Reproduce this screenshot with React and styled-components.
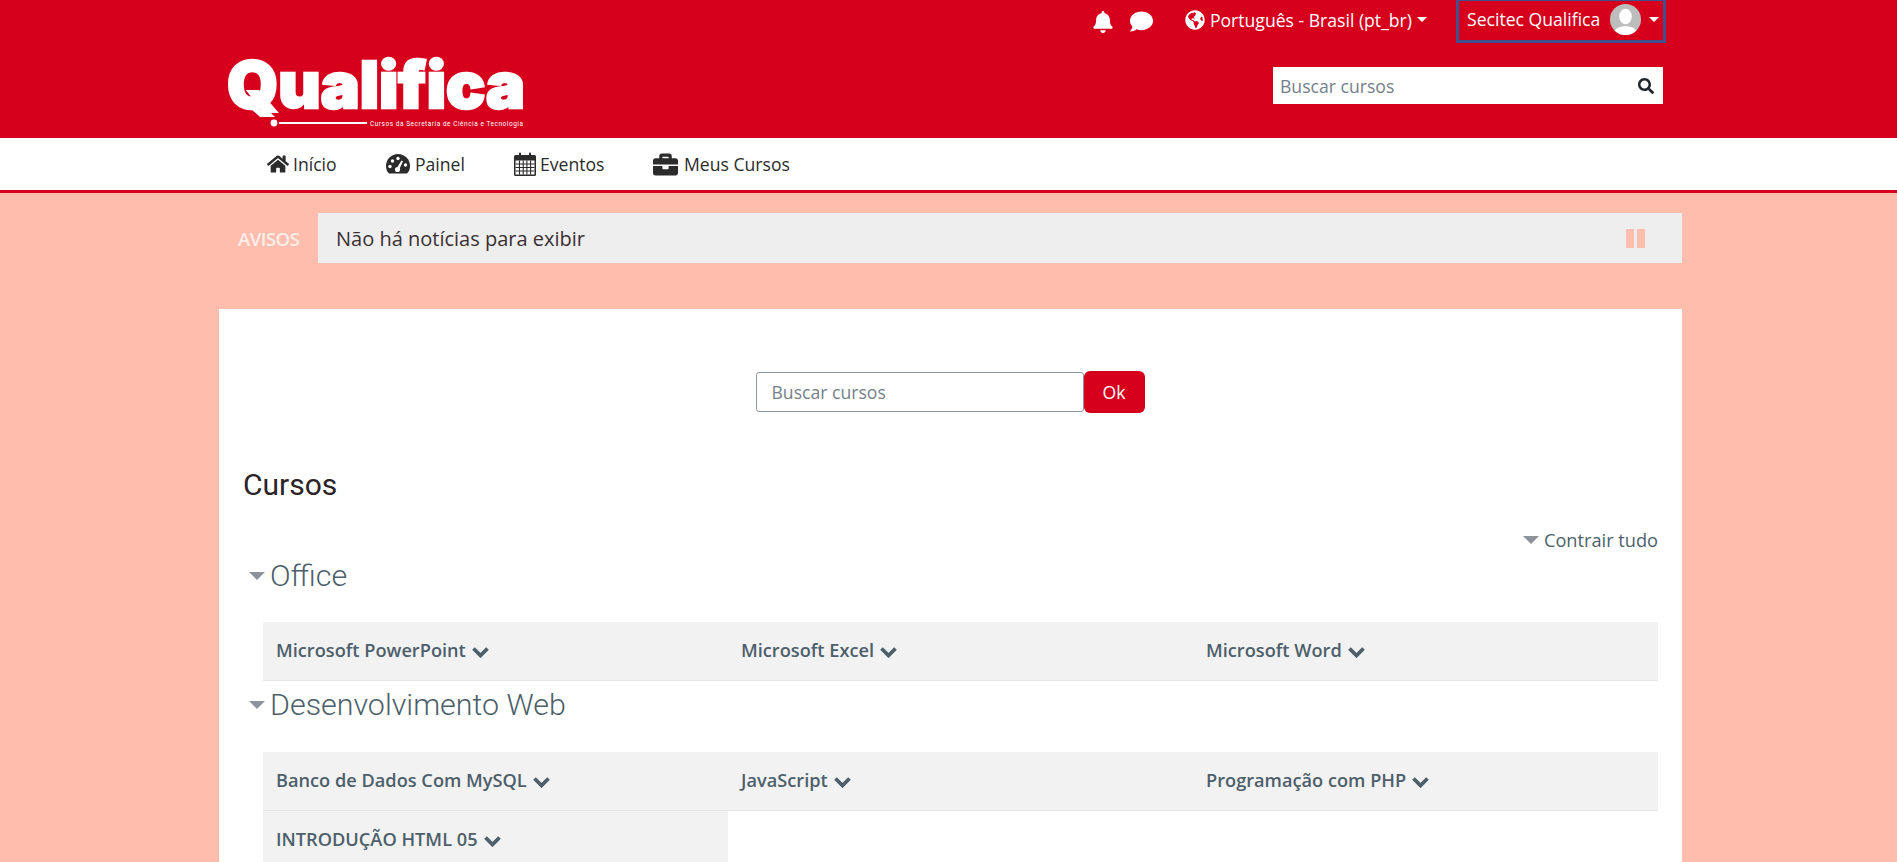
import styled, { createGlobalStyle } from "styled-components";
import {
  FaBell,
  FaBriefcase,
  FaComment,
  FaGlobeAmericas,
  FaHome,
  FaSearch,
} from "react-icons/fa";

const red = "#d6001c";
const pink = "#ffbdae";
const slate = "#4d5f6b";

const Global = createGlobalStyle`
  html, body {
    margin: 0;
    height: 862px;
    overflow: hidden;
    background: ${pink};
    font-family: "Open Sans", "Liberation Sans", sans-serif;
    font-size: 17.6px;
  }
  * { box-sizing: border-box; }
`;

const Header = styled.header`
  height: 138px;
  background: ${red};
  color: #fff;
  padding: 0 231px 0 226px;
`;

const TopRow = styled.div`
  display: flex;
  justify-content: flex-end;
  align-items: center;
  height: 43px;
`;

const TopIcon = styled.span`
  display: flex;
  font-size: ${(p) => p.$size}px;
  margin-right: ${(p) => p.$gap}px;
`;

const Lang = styled.div`
  display: flex;
  align-items: center;
  gap: 5px;
  margin-right: 29px;
  padding-bottom: 4px;
`;

const Caret = styled.span`
  width: 0;
  height: 0;
  flex: none;
  margin-left: ${(p) => p.$left || 0}px;
  border-left: 5px solid transparent;
  border-right: 5px solid transparent;
  border-top: 5px solid #fff;
`;

const UserBox = styled.div`
  display: flex;
  align-items: center;
  width: 210px;
  height: 43px;
  padding: 0 0 3px 8px;
  border: 3px solid #3f4f8f;
  border-top-width: 1px;
  white-space: nowrap;
`;

const Avatar = styled.svg`
  width: 31px;
  height: 31px;
  border-radius: 50%;
  margin-left: 10px;
  flex: none;
`;

const BrandRow = styled.div`
  display: flex;
  justify-content: space-between;
  align-items: flex-start;
  padding-top: 15px;
`;

const Logo = styled.svg`
  width: 302px;
  height: 72px;
  display: block;
  overflow: visible;
`;

const TopSearch = styled.div`
  display: flex;
  align-items: center;
  justify-content: space-between;
  width: 390px;
  height: 37px;
  margin: 9px 3px 0 0;
  padding: 0 9px 0 7px;
  background: #fff;
  color: #75808a;

  svg {
    color: #212529;
    font-size: 16px;
  }
`;

const Nav = styled.nav`
  display: flex;
  align-items: center;
  height: 55px;
  padding-left: 267px;
  background: #fff;
  border-bottom: 3px solid ${red};
  color: #2b2b2b;
`;

const NavItem = styled.a`
  display: flex;
  align-items: center;
  gap: ${(p) => p.$gap || 4}px;
  width: ${(p) => p.$width}px;

  svg {
    font-size: ${(p) => p.$icon || 22}px;
    flex: none;
  }
`;

const Page = styled.main`
  padding: 20px 215px 0 219px;
`;

const Notice = styled.div`
  display: flex;
  align-items: center;
  height: 50px;
`;

const NoticeLabel = styled.div`
  width: 99px;
  padding-left: 19px;
  color: #fff;
  font-size: 18.5px;
  font-weight: 600;
  letter-spacing: -0.5px;
  opacity: 0.75;
`;

const NoticeBar = styled.div`
  flex: 1;
  height: 100%;
  display: flex;
  align-items: center;
  justify-content: space-between;
  padding: 0 37px 0 18px;
  background: #eee;
  color: #3a3033;
  font-size: 20px;
`;

const Pause = styled.span`
  display: flex;
  gap: 3px;

  i {
    width: 8px;
    height: 19px;
    background: ${pink};
  }
`;

const Card = styled.section`
  margin-top: 46px;
  height: 560px;
  padding: 62px 24px 0 24px;
  background: #fff;
`;

const SearchForm = styled.form`
  display: flex;
  align-items: center;
  justify-content: center;
  margin-right: 1px;
`;

const SearchInput = styled.div`
  display: flex;
  align-items: center;
  width: 328px;
  height: 40px;
  padding-left: 15px;
  border: 1px solid #8f959e;
  border-radius: 3px;
  color: #75808a;
`;

const OkButton = styled.button`
  width: 61px;
  height: 42px;
  border: 0;
  border-radius: 6px;
  background: ${red};
  color: #fff;
  font: inherit;
`;

const Title = styled.h2`
  margin: 54px 0 0;
  color: #2b2326;
  font-family: Roboto, sans-serif;
  font-size: 30px;
  font-weight: 400;
  line-height: 36px;
`;

const CollapseAll = styled.div`
  display: flex;
  align-items: center;
  justify-content: flex-end;
  margin-top: 25px;
  color: ${slate};
  font-size: 18.2px;
  line-height: 24px;
`;

const Triangle = styled.span`
  width: 0;
  height: 0;
  margin-right: ${(p) => p.$gap}px;
  border-left: 8px solid transparent;
  border-right: 8px solid transparent;
  border-top: 8px solid #8d929b;
`;

const Category = styled.h3`
  display: flex;
  align-items: center;
  margin: ${(p) => p.$top}px 0 ${(p) => p.$bottom}px;
  padding-left: 6px;
  color: ${slate};
  font-family: Roboto, sans-serif;
  font-size: 30.4px;
  font-weight: 300;
  line-height: 36px;
`;

const CourseGrid = styled.div`
  display: grid;
  grid-template-columns: repeat(3, 465px);
  margin-left: 20px;
`;

const Course = styled.div`
  display: flex;
  align-items: center;
  gap: 5px;
  height: 59px;
  padding: 0 0 2px 13px;
  background: #f2f2f2;
  border-bottom: 1px solid #e6e6e6;
  color: ${slate};
  font-size: 18.2px;
  font-weight: 600;
`;

const ChevronMark = styled.svg`
  width: 19px;
  height: 13px;
  margin-top: 2px;
  flex: none;
`;

function GaugeIcon() {
  return (
    <svg width="24" height="20" viewBox="0 0 24 20">
      <path d="M3 19.500C1 17.500 0 15 0 12a12 12 0 0 1 24 0c0 3-1 5.500-3 7.500z" fill="currentColor" />
      <g fill="#fff">
        <circle cx="4" cy="12.500" r="1.700" />
        <circle cx="6.500" cy="7" r="1.700" />
        <circle cx="12" cy="4.500" r="1.700" />
        <circle cx="19.500" cy="11" r="1.700" />
        <circle cx="11.500" cy="15.500" r="2.600" />
        <path d="M10.500 14.500L15.500 6.500l1.500.8-4 8.500z" />
      </g>
    </svg>
  );
}

function CalendarIcon() {
  return (
    <svg width="22" height="24" viewBox="0 0 22 24" fill="currentColor">
      <path d="M1.5 3H5V1.5a1 1 0 0 1 2 0V3h8V1.500a1 1 0 0 1 2 0V3h3.500A1.500 1.500 0 0 1 22 4.500V22.500A1.500 1.500 0 0 1 20.500 24H1.500A1.500 1.500 0 0 1 0 22.500V4.500A1.500 1.500 0 0 1 1.500 3zM1.500 8.500V22.500H20.500V8.500z" />
      <path d="M1.500 12h19M1.500 15.500h19M1.500 19h19M5.500 8.500v14M9.200 8.500v14M12.900 8.500v14M16.600 8.500v14" stroke="currentColor" strokeWidth="1.100" fill="none" />
    </svg>
  );
}

function Chevron() {
  return (
    <ChevronMark viewBox="0 0 19 13">
      <path d="M2.500 3.500l7 7 7-7" fill="none" stroke="currentColor" strokeWidth="3.800" />
    </ChevronMark>
  );
}

export default function App() {
  return (
    <>
      <Global />
      <Header>
        <TopRow>
          <TopIcon $size={22} $gap={16}><FaBell /></TopIcon>
          <TopIcon $size={23} $gap={32}><FaComment /></TopIcon>
          <Lang>
            <FaGlobeAmericas size={20} />
            Português - Brasil (pt_br)
            <Caret />
          </Lang>
          <UserBox>
            Secitec Qualifica
            <Avatar viewBox="0 0 32 32">
              <rect width="32" height="32" fill="#bdbdbd" />
              <ellipse cx="16" cy="13" rx="6.500" ry="8" fill="#fff" />
              <path d="M3 32c1-7 7-9 13-9s12 2 13 9z" fill="#fff" />
            </Avatar>
            <Caret $left={8} />
          </UserBox>
        </TopRow>
        <BrandRow>
          <Logo viewBox="0 0 302 72">
            <text x="1" y="50" textLength="298" lengthAdjust="spacingAndGlyphs" fontFamily="Inter, 'Liberation Sans', sans-serif" fontWeight="900" fontSize="64" fill="#fff" stroke="#fff" strokeWidth="2.500">
              Qualifica
            </text>
            <path d="M24 50l10 9h15l-7-7z" fill="#fff" />
            <circle cx="48" cy="65" r="3.400" fill="#fff" />
            <rect x="53" y="64" width="88" height="2" fill="#fff" />
            <text x="144" y="67.500" textLength="153" fontFamily="Roboto, sans-serif" fontSize="6.500" fill="#fff">
              Cursos da Secretaria de Ciência e Tecnologia
            </text>
          </Logo>
          <TopSearch>
            Buscar cursos
            <FaSearch />
          </TopSearch>
        </BrandRow>
      </Header>
      <Nav>
        <NavItem $width={119}><FaHome />Início</NavItem>
        <NavItem $width={128} $gap={5}><GaugeIcon />Painel</NavItem>
        <NavItem $width={139}><CalendarIcon />Eventos</NavItem>
        <NavItem $icon={25} $gap={6}><FaBriefcase />Meus Cursos</NavItem>
      </Nav>
      <Page>
        <Notice>
          <NoticeLabel>AVISOS</NoticeLabel>
          <NoticeBar>
            Não há notícias para exibir
            <Pause><i /><i /></Pause>
          </NoticeBar>
        </Notice>
        <Card>
          <SearchForm>
            <SearchInput>Buscar cursos</SearchInput>
            <OkButton type="button">Ok</OkButton>
          </SearchForm>
          <Title>Cursos</Title>
          <CollapseAll><Triangle $gap={5} />Contrair tudo</CollapseAll>
          <Category $top={6} $bottom={28}><Triangle $gap={5} />Office</Category>
          <CourseGrid>
            <Course>Microsoft PowerPoint <Chevron /></Course>
            <Course>Microsoft Excel <Chevron /></Course>
            <Course>Microsoft Word <Chevron /></Course>
          </CourseGrid>
          <Category $top={6} $bottom={29}><Triangle $gap={5} />Desenvolvimento Web</Category>
          <CourseGrid>
            <Course>Banco de Dados Com MySQL <Chevron /></Course>
            <Course>JavaScript <Chevron /></Course>
            <Course>Programação com PHP <Chevron /></Course>
            <Course>INTRODUÇÃO HTML 05 <Chevron /></Course>
          </CourseGrid>
        </Card>
      </Page>
    </>
  );
}
